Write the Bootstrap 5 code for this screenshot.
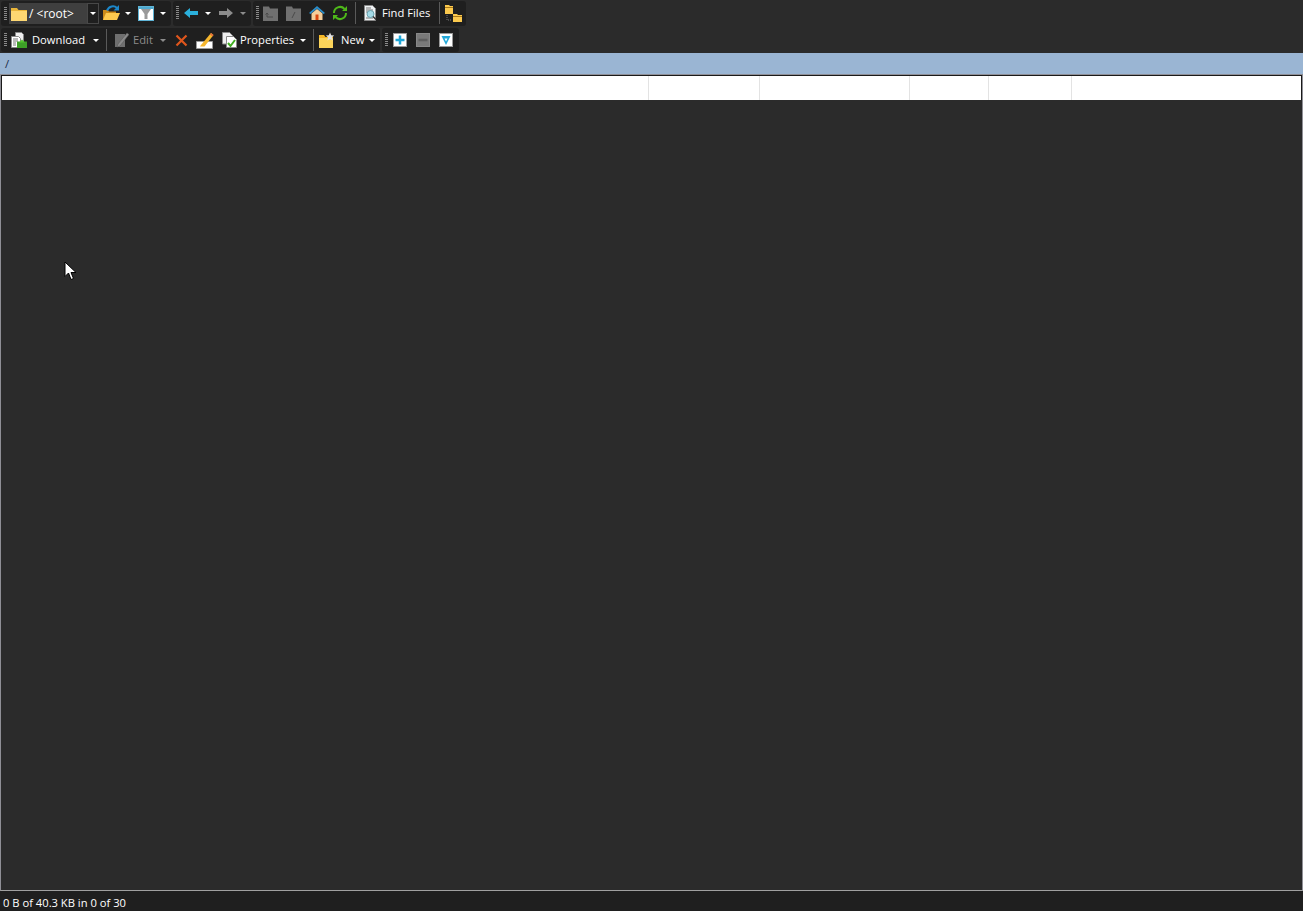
<!DOCTYPE html>
<html>

<head>
  <meta charset="utf-8">
  <title>FTP</title>
  <link href="https://cdn.jsdelivr.net/npm/bootstrap@5.3.0/dist/css/bootstrap.min.css" rel="stylesheet">
  <style>
    body { background: #2b2b2b; font-family: "Open Sans", "Noto Sans", sans-serif; font-size: 11.2px; color: #fff; overflow: hidden; }
    .app-shell { height: 911px; position: relative; }
    .bar-row { height: 25px; margin-top: 1px; padding-left: 1px; gap: 2px; }
    .bar-row + .bar-row { height: 24px; margin-top: 2px; margin-bottom: 1px; }
    .tool-band { background: #1f1f1f; border-radius: 3px; height: 100%; }
    .band-a { width: 170px; }
    .band-b { width: 78px; padding-bottom: 1px; }
    .band-c { width: 213px; padding-bottom: 1px; }
    .band-d { width: 379px; }
    .band-e { width: 77px; }
    .grip { flex: none; width: 3px; height: 14px; margin-left: 3px; background: repeating-linear-gradient(#8a8a8a 0 1px, #1f1f1f 1px 2px); }
    .tool-icon { flex: none; display: block; }
    .icon-lift { margin-bottom: 2px; }
    .caret-down { flex: none; width: 0; height: 0; border-left: 3px solid transparent; border-right: 3px solid transparent; border-top: 3px solid #fff; }
    .caret-off { border-top-color: #8c8c8c; }
    .tool-sep { flex: none; width: 1px; height: 22px; background: #5a5a5a; }
    .tool-text { flex: none; white-space: nowrap; line-height: 1; }
    .text-off { color: #8c8c8c; }
    .w-find { width: 49px; }
    .w-down { width: 54px; }
    .w-edit { width: 20px; }
    .w-props { width: 53px; }
    .w-new { width: 24px; }
    .combo-box { flex: none; width: 90px; height: 21px; margin-left: 2px; background: #3f3f3f; }
    .combo-label { margin-left: 2px; white-space: nowrap; font-size: 12px; }
    .combo-drop { width: 12px; height: 21px; margin-left: auto; background: #1f1f1f; border: 1px solid #484848; }
    .m2 { margin-left: 2px; }
    .m3 { margin-left: 3px; }
    .m4 { margin-left: 4px; }
    .m5 { margin-left: 5px; }
    .m6 { margin-left: 6px; }
    .m7 { margin-left: 7px; }
    .m8 { margin-left: 8px; }
    .m9 { margin-left: 9px; }
    .path-bar { height: 21px; background: #9ab5d3; color: #1b2a44; padding-left: 5px; line-height: 21px; }
    .file-panel { flex: 1; background: #2b2b2b; border-top: 1px solid #8f8f96; border-left: 1px solid #8f8f96; border-right: 1px solid #8f8f96; border-bottom: 1px solid #a0a0a0; }
    .head-row { height: 25px; background: #fff; border: 1px solid #1a1a1a; border-bottom: 0; }
    .head-cell { height: 100%; border-right: 1px solid #e3e3e3; }
    .c-name { width: 647px; }
    .c-size { width: 111px; }
    .c-date { width: 150px; }
    .c-attr { width: 79px; }
    .c-own { width: 83px; }
    .c-rest { flex: 1; border-right: 0; }
    .status-line { height: 20px; background: #1f1f1f; padding-left: 3px; line-height: 23px; }
    .mouse-arrow { position: absolute; left: 64px; top: 261px; }
  </style>
</head>

<body>
  <div class="app-shell d-flex flex-column">
    <div class="bar-row d-flex">
      <div class="tool-band band-a d-flex align-items-center">
        <div class="grip"></div>
        <div class="combo-box d-flex align-items-center">
          <svg class="tool-icon m2" width="16" height="16" viewBox="0 0 16 16"><path d="M0 2h6l1.500 2H16v11H0z" fill="#e9b53a"/><path d="M0 5h16v10H0z" fill="#fdd772"/></svg>
          <span class="combo-label">/ &lt;root&gt;</span>
          <div class="combo-drop d-flex align-items-center justify-content-center"><div class="caret-down"></div></div>
        </div>
        <svg class="tool-icon icon-lift m4" width="17" height="17" viewBox="0 0 17 17"><path d="M0 6h5l1 1.500h7V16H0z" fill="#c98a1a"/><path d="M3 9h14l-3 7H0z" fill="#fbc94e"/><path d="M4 6.500C6 2 11 1 14 4" fill="none" stroke="#1c86c8" stroke-width="2"/><path d="M16 1v5.500h-5.500z" fill="#1c86c8"/></svg>
        <div class="caret-down m5"></div>
        <svg class="tool-icon icon-lift m7" width="16" height="16" viewBox="0 0 16 16"><rect x=".5" y="1.500" width="15" height="14" fill="#fff" stroke="#5fb4d6"/><path d="M1 2h14v2H1z" fill="#4ea9cf"/><path d="M3 4h10L9.500 9v5h-3V9z" fill="#9a9a9a"/></svg>
        <div class="caret-down m6"></div>
      </div>
      <div class="tool-band band-b d-flex align-items-center">
        <div class="grip"></div>
        <svg class="tool-icon m5" width="14" height="12" viewBox="0 0 14 12"><path d="M0 6l6-5v3h8v4H6v3z" fill="#2bb0dc"/></svg>
        <div class="caret-down m7"></div>
        <svg class="tool-icon m8" width="14" height="12" viewBox="0 0 14 12"><path d="M14 6L8 1v3H0v4h8v3z" fill="#8c8c8c"/></svg>
        <div class="caret-down caret-off m7"></div>
      </div>
      <div class="tool-band band-c d-flex align-items-center">
        <div class="grip"></div>
        <svg class="tool-icon m4" width="15" height="15" viewBox="0 0 15 15"><path d="M0 .5h6l1 2h8V15H0z" fill="#707070"/><path d="M4 7v4h6M4 7L2.500 8.500M4 7l1.500 1.500" fill="none" stroke="#4a4a4a"/></svg>
        <svg class="tool-icon m8" width="15" height="15" viewBox="0 0 15 15"><path d="M0 .5h6l1 2h8V15H0z" fill="#707070"/><path d="M6 12l3-6" stroke="#4a4a4a"/></svg>
        <svg class="tool-icon m8" width="16" height="16" viewBox="0 0 16 16"><path d="M8 1L0 8l1.500 1L8 3.500 14.500 9 16 8z" fill="#2a8ecb"/><path d="M2.500 8.500L8 4l5.500 4.500V15h-11z" fill="#f5cf9a"/><path d="M6.500 9.500h3V15h-3z" fill="#d9480f"/></svg>
        <svg class="tool-icon m7" width="16" height="16" viewBox="0 0 16 16"><path d="M2 8a6 6 0 0 1 10.500-4" fill="none" stroke="#4eb81a" stroke-width="2"/><path d="M14 8a6 6 0 0 1-10.500 4" fill="none" stroke="#4eb81a" stroke-width="2"/><path d="M15 1v5h-5zM1 15v-5h5z" fill="#4eb81a"/></svg>
        <div class="tool-sep m7"></div>
        <svg class="tool-icon m7" width="15" height="16" viewBox="0 0 15 16"><path d="M1.500 .5h8l3 3v12h-11z" fill="#eef2f4" stroke="#8a8a8a"/><path d="M3 3h5M3 5h7M3 7h2M3 13h7" stroke="#777"/><circle cx="7.500" cy="9" r="3.500" fill="#a4dbe8" stroke="#6aa2ae"/><path d="M10 11.500l3 3" stroke="#333" stroke-width="1.500"/></svg>
        <span class="tool-text w-find m4">Find Files</span>
        <div class="tool-sep m8"></div>
        <svg class="tool-icon m5" width="17" height="17" viewBox="0 0 17 17"><path d="M0 0h4l1 1h3v8H0z" fill="#fbc94e"/><path d="M8 9h4l1 1h4v7H8z" fill="#fbc94e"/><path d="M2 10v5h5" fill="none" stroke="#777" stroke-dasharray="1 1"/><path d="M0 2.500h8M8 11.500h9" stroke="#a8781a"/></svg>
      </div>
    </div>
    <div class="bar-row d-flex">
      <div class="tool-band band-d d-flex align-items-center">
        <div class="grip"></div>
        <svg class="tool-icon m4" width="16" height="16" viewBox="0 0 16 16"><path d="M4.500 .5h6l2 2v9h-8z" fill="#eee" stroke="#888"/><path d="M.5 4.500h7l2 2v9h-9z" fill="#fff" stroke="#888"/><path d="M2 7h5M2 9h5M2 11h3M2 13h3" stroke="#777"/><path d="M6 9.500h10V16H6z" fill="#3d9f27"/><path d="M11 7.500l3 3h-6z" fill="#55c431"/></svg>
        <span class="tool-text w-down m5">Download</span>
        <div class="caret-down m7"></div>
        <div class="tool-sep m7"></div>
        <svg class="tool-icon m7" width="15" height="16" viewBox="0 0 15 16"><path d="M1 2h10v13H1z" fill="#6f6f6f"/><path d="M4 12L13 1l2 1.500L6 14l-3 1z" fill="#8a8a8a" stroke="#555" stroke-width=".5"/></svg>
        <span class="tool-text w-edit text-off m4">Edit</span>
        <div class="caret-down caret-off m7"></div>
        <svg class="tool-icon m9" width="13" height="13" viewBox="0 0 13 13"><path d="M1.500 1.500l10 10M11.500 1.500l-10 10" stroke="#e0561c" stroke-width="2.200"/></svg>
        <svg class="tool-icon m8" width="18" height="17" viewBox="0 0 18 17"><path d="M.5 9.500h16v7H.5z" fill="#fff" stroke="#999"/><path d="M5 13L15 1l2.500 2-9 11.500H4z" fill="#f5b62d"/><path d="M14 2.500L15 1l2.500 2-1 1.500z" fill="#e36f3c"/></svg>
        <svg class="tool-icon m7" width="16" height="16" viewBox="0 0 16 16"><path d="M1.500 .5h7l3 3V12h-10z" fill="#eee" stroke="#888"/><path d="M5.500 4.500h7l3 3v8h-10z" fill="#fff" stroke="#888"/><path d="M7 11l2.500 3 4.500-6" fill="none" stroke="#3fae1f" stroke-width="2"/></svg>
        <span class="tool-text w-props m3">Properties</span>
        <div class="caret-down m7"></div>
        <div class="tool-sep m7"></div>
        <svg class="tool-icon m5" width="16" height="16" viewBox="0 0 16 16"><path d="M0 3h5l1.500 2H14v11H0z" fill="#f6b827"/><path d="M0 6h14v10H0z" fill="#fbd45a"/><path d="M11 .5l1.200 2.800 3 .2-2.300 2 .8 3L11 7l-2.700 1.500.8-3-2.300-2 3-.2z" fill="#e2e2e2"/></svg>
        <span class="tool-text w-new m6">New</span>
        <div class="caret-down m4"></div>
      </div>
      <div class="tool-band band-e d-flex align-items-center">
        <div class="grip"></div>
        <svg class="tool-icon m5" width="14" height="14" viewBox="0 0 14 14"><rect x=".5" y=".5" width="13" height="13" fill="#fff" stroke="#999"/><path d="M7 2.500v9M2.500 7h9" stroke="#1ea5d6" stroke-width="2.500"/></svg>
        <svg class="tool-icon m9" width="14" height="14" viewBox="0 0 14 14"><rect x=".5" y=".5" width="13" height="13" fill="#7a7a7a" stroke="#888"/><path d="M2.500 7h9" stroke="#5f5f5f" stroke-width="2.500"/></svg>
        <svg class="tool-icon m9" width="14" height="14" viewBox="0 0 14 14"><rect x=".5" y=".5" width="13" height="13" fill="#fff" stroke="#9a9a9a"/><path d="M2.500 3h9L7 12z" fill="#23a8d8"/><path d="M5.500 5.500h3L7 8.500z" fill="#fff"/></svg>
      </div>
    </div>
    <div class="path-bar">/</div>
    <div class="file-panel">
      <div class="head-row d-flex">
        <div class="head-cell c-name"></div>
        <div class="head-cell c-size"></div>
        <div class="head-cell c-date"></div>
        <div class="head-cell c-attr"></div>
        <div class="head-cell c-own"></div>
        <div class="head-cell c-rest"></div>
      </div>
    </div>
    <div class="status-line">0 B of 40.3 KB in 0 of 30</div>
    <svg class="mouse-arrow" width="13" height="20" viewBox="0 0 13 20"><path d="M1 1v14.500l3.500-3.500 2.500 6.500 2.500-1-2.500-6h5z" fill="#fff" stroke="#000"/></svg>
  </div>
  <script src="https://cdn.jsdelivr.net/npm/bootstrap@5.3.0/dist/js/bootstrap.bundle.min.js"></script>
</body>

</html>
